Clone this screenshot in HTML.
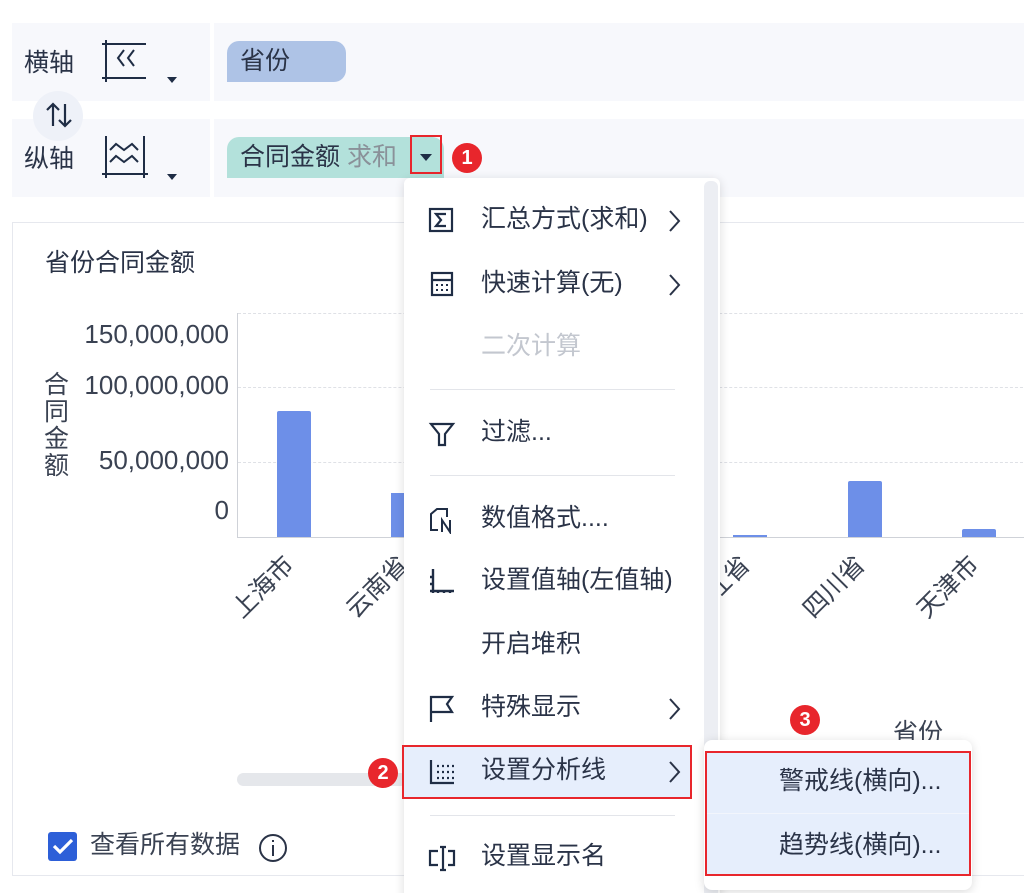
<!DOCTYPE html>
<html><head><meta charset="utf-8"><style>
*{margin:0;padding:0;box-sizing:border-box}
html,body{width:1024px;height:893px;overflow:hidden}
body{background:#fff;font-family:"Liberation Sans","Noto Sans CJK SC",sans-serif;color:#2a3347;position:relative}
.a{position:absolute}
.t{position:absolute;white-space:nowrap;font-size:25px;line-height:1}
.badge{position:absolute;width:30px;height:30px;border-radius:50%;background:#e8262c;color:#fff;font-size:20px;font-weight:bold;text-align:center;line-height:30px}
.mi{position:absolute;left:481px;font-size:25px;line-height:1;white-space:nowrap;color:#2a3347}
.chev{position:absolute;left:666px}
.sep{position:absolute;left:430px;width:245px;height:1px;background:#e3e5ea}
.ic{position:absolute;left:428px}
</style></head><body>
<div class="a" style="left:12px;top:23px;width:1012px;height:78px;background:#f7f8fc"></div>
<div class="a" style="left:12px;top:119px;width:1012px;height:78px;background:#f7f8fc"></div>
<div class="a" style="left:210px;top:23px;width:4px;height:174px;background:#fff"></div>
<div class="t" style="left:24px;top:51px">横轴</div>
<div class="t" style="left:24px;top:147px">纵轴</div>
<svg class="a" style="left:100px;top:38px" width="52" height="46" viewBox="0 0 52 46" fill="none" stroke="#1f2d45" stroke-width="2">
<path d="M6 2V44M2 6H46M2 40H46M24 12l-6 8 6 8M34 12l-6 8 6 8"/></svg>
<svg class="a" style="left:100px;top:134px" width="52" height="46" viewBox="0 0 52 46" fill="none" stroke="#1f2d45" stroke-width="2">
<path d="M6 2V44M44 2V44M2 40H48M10 16l6-6 8 6 8-6 6 6M10 28l6-6 8 6 8-6 6 6"/></svg>
<svg class="a" style="left:167px;top:77px" width="10" height="8"><path d="M0 0H10L5 6Z" fill="#1f2d45"/></svg>
<svg class="a" style="left:167px;top:174px" width="10" height="8"><path d="M0 0H10L5 6Z" fill="#1f2d45"/></svg>
<div class="a" style="left:33px;top:91px;width:50px;height:50px;border-radius:50%;background:#eef1f8"></div>
<svg class="a" style="left:45px;top:102px" width="28" height="26" fill="none" stroke="#1f2d45" stroke-width="2.2"><path d="M8 24V2M2 8l6-6 6 6M20 2V24M14 18l6 6 6-6"/></svg>
<div class="a" style="left:227px;top:41px;width:119px;height:41px;background:#aec3e6;border-radius:12px 12px 12px 0"></div>
<div class="t" style="left:240px;top:49px">省份</div>
<div class="a" style="left:227px;top:137px;width:217px;height:41px;background:#b3e1db;border-radius:12px 12px 0 0"></div>
<div class="t" style="left:240px;top:145px">合同金额 <span style="color:#8a9199">求和</span></div>
<div class="a" style="left:410px;top:135px;width:32px;height:39px;border:2px solid #e8262c"></div>
<svg class="a" style="left:420px;top:154px" width="12" height="8"><path d="M0 0H12L6 7Z" fill="#1f2d45"/></svg>
<div class="badge" style="left:452px;top:143px">1</div>
<div class="a" style="left:12px;top:222px;width:1030px;height:654px;border:1px solid #e6e8ee"></div>
<div class="t" style="left:45px;top:251px">省份合同金额</div>
<div class="t" style="left:75px;top:321px;width:154px;text-align:right;color:#3a4252;font-size:26px">150,000,000</div>
<div class="t" style="left:75px;top:372px;width:154px;text-align:right;color:#3a4252;font-size:26px">100,000,000</div>
<div class="t" style="left:75px;top:447px;width:154px;text-align:right;color:#3a4252;font-size:26px">50,000,000</div>
<div class="t" style="left:75px;top:497px;width:154px;text-align:right;color:#3a4252;font-size:26px">0</div>
<div class="a" style="left:44px;top:372px;width:27px;font-size:25px;line-height:27px;color:#3a4252">合同金额</div>
<div class="a" style="left:237px;top:313px;width:1px;height:224px;background:#cfd2d8"></div>
<div class="a" style="left:237px;top:537px;width:800px;height:1px;background:#cfd2d8"></div>
<div class="a" style="left:238px;top:313px;width:800px;border-top:1px dashed #dfe1e6"></div>
<div class="a" style="left:238px;top:387px;width:800px;border-top:1px dashed #dfe1e6"></div>
<div class="a" style="left:238px;top:462px;width:800px;border-top:1px dashed #dfe1e6"></div>
<div class="a" style="left:277px;top:411px;width:34px;height:126px;background:#6d8fe8;border-radius:2px 2px 0 0"></div>
<div class="a" style="left:391px;top:493px;width:34px;height:44px;background:#6d8fe8"></div>
<div class="a" style="left:733px;top:535px;width:34px;height:2px;background:#6d8fe8"></div>
<div class="a" style="left:848px;top:481px;width:34px;height:56px;background:#6d8fe8;border-radius:2px 2px 0 0"></div>
<div class="a" style="left:962px;top:529px;width:34px;height:8px;background:#6d8fe8;border-radius:2px 2px 0 0"></div>
<div class="t" style="left:226px;top:575px;transform:rotate(-45deg);color:#3a4252">上海市</div>
<div class="t" style="left:340px;top:575px;transform:rotate(-45deg);color:#3a4252">云南省</div>
<div class="t" style="left:682px;top:575px;transform:rotate(-45deg);color:#3a4252">浙江省</div>
<div class="t" style="left:797px;top:575px;transform:rotate(-45deg);color:#3a4252">四川省</div>
<div class="t" style="left:911px;top:575px;transform:rotate(-45deg);color:#3a4252">天津市</div>
<div class="t" style="left:893px;top:721px;color:#3a4252">省份</div>
<div class="a" style="left:237px;top:773px;width:170px;height:13px;border-radius:7px;background:#e5e7eb"></div>
<div class="a" style="left:48px;top:832px;width:29px;height:29px;border-radius:3px;background:#2d5fd8"></div>
<svg class="a" style="left:52px;top:837px" width="22" height="18" fill="none" stroke="#fff" stroke-width="3.2"><path d="M2 9l6 6L20 3"/></svg>
<div class="t" style="left:90px;top:833px;color:#3a4252">查看所有数据</div>
<svg class="a" style="left:258px;top:833px" width="30" height="30" fill="none" stroke="#2a3347" stroke-width="2"><circle cx="15" cy="15" r="13"/><path d="M15 12V23M15 7V9"/></svg>
<div class="a" style="left:404px;top:178px;width:316px;height:730px;background:#fff;border-radius:6px;box-shadow:0 2px 10px rgba(0,0,0,.14)"></div>
<div class="a" style="left:704px;top:181px;width:14px;height:720px;background:#eceef3;border-radius:6px"></div>
<svg class="ic" style="top:206px" width="28" height="28" fill="none" stroke="#1f2d45" stroke-width="2.2"><rect x="2" y="3" width="22" height="22"/><path d="M18 8H8l5 6-5 6h10"/></svg>
<div class="mi" style="top:207px">汇总方式(求和)</div>
<svg class="chev" style="top:208px" width="16" height="26" fill="none" stroke="#2a3347" stroke-width="2"><path d="M4 3l9 10-9 10"/></svg>
<svg class="ic" style="top:270px" width="28" height="28" fill="none" stroke="#1f2d45" stroke-width="2.2"><rect x="4" y="3" width="20" height="22"/><path d="M4 10H24"/><path d="M8 15h2M13 15h2M18 15h2M8 20h2M13 20h2M18 20h2" stroke-width="2"/></svg>
<div class="mi" style="top:271px">快速计算(无)</div>
<svg class="chev" style="top:272px" width="16" height="26" fill="none" stroke="#2a3347" stroke-width="2"><path d="M4 3l9 10-9 10"/></svg>
<div class="mi" style="top:334px;color:#c3c7cf">二次计算</div>
<div class="sep" style="top:389px"></div>
<svg class="ic" style="top:420px" width="28" height="28" fill="none" stroke="#1f2d45" stroke-width="2.2"><path d="M3 4H25L17 14V25H11V14Z"/></svg>
<div class="mi" style="top:420px">过滤...</div>
<div class="sep" style="top:475px"></div>
<svg class="ic" style="top:506px" width="30" height="28" fill="none" stroke="#1f2d45" stroke-width="2"><path d="M10 24H3V8L9 3H19V11M14 26V14L22 26V14"/></svg>
<div class="mi" style="top:506px">数值格式....</div>
<svg class="ic" style="top:567px" width="30" height="28" fill="none" stroke="#1f2d45" stroke-width="2.4"><path d="M5 2V26M2 24H26M10 24v2M16 24v2M22 24v2M2 10H5M2 17H5"/></svg>
<div class="mi" style="top:568px">设置值轴(左值轴)</div>
<div class="mi" style="top:632px">开启堆积</div>
<svg class="ic" style="top:694px" width="28" height="30" fill="none" stroke="#1f2d45" stroke-width="2.2"><path d="M3 28V3H24L19 10l5 8H3"/></svg>
<div class="mi" style="top:695px">特殊显示</div>
<svg class="chev" style="top:696px" width="16" height="26" fill="none" stroke="#2a3347" stroke-width="2"><path d="M4 3l9 10-9 10"/></svg>
<div class="a" style="left:404px;top:745px;width:288px;height:54px;background:#e6eefc"></div>
<div class="a" style="left:402px;top:745px;width:290px;height:54px;border:2px solid #e8262c"></div>
<svg class="ic" style="top:758px" width="28" height="28" fill="none" stroke="#1f2d45" stroke-width="2.2"><path d="M3 2V25H26"/><path d="M9 8h2M14 8h2M19 8h2M24 8h2M9 14h2M14 14h2M19 14h2M24 14h2M9 20h2M14 20h2M19 20h2M24 20h2"/></svg>
<div class="mi" style="top:758px">设置分析线</div>
<svg class="chev" style="top:759px" width="16" height="26" fill="none" stroke="#2a3347" stroke-width="2"><path d="M4 3l9 10-9 10"/></svg>
<div class="badge" style="left:368px;top:758px">2</div>
<div class="sep" style="top:815px"></div>
<svg class="ic" style="top:843px" width="30" height="30" fill="none" stroke="#1f2d45" stroke-width="2.2"><path d="M10 8H2V22H10M20 8H26V22H20M12 4H18M15 4V27M12 27H18"/></svg>
<div class="mi" style="top:844px">设置显示名</div>
<div class="a" style="left:704px;top:740px;width:268px;height:150px;background:#fff;border-radius:8px;box-shadow:0 2px 10px rgba(0,0,0,.15)"></div>
<div class="a" style="left:706px;top:751px;width:264px;height:124px;background:#e6eefc"></div>
<div class="a" style="left:706px;top:813px;width:264px;height:1px;background:#f2f5fc"></div>
<div class="a" style="left:705px;top:751px;width:266px;height:125px;border:2px solid #e8262c"></div>
<div class="t" style="left:779px;top:769px">警戒线(横向)...</div>
<div class="t" style="left:779px;top:833px">趋势线(横向)...</div>
<div class="badge" style="left:790px;top:705px">3</div>
</body></html>
